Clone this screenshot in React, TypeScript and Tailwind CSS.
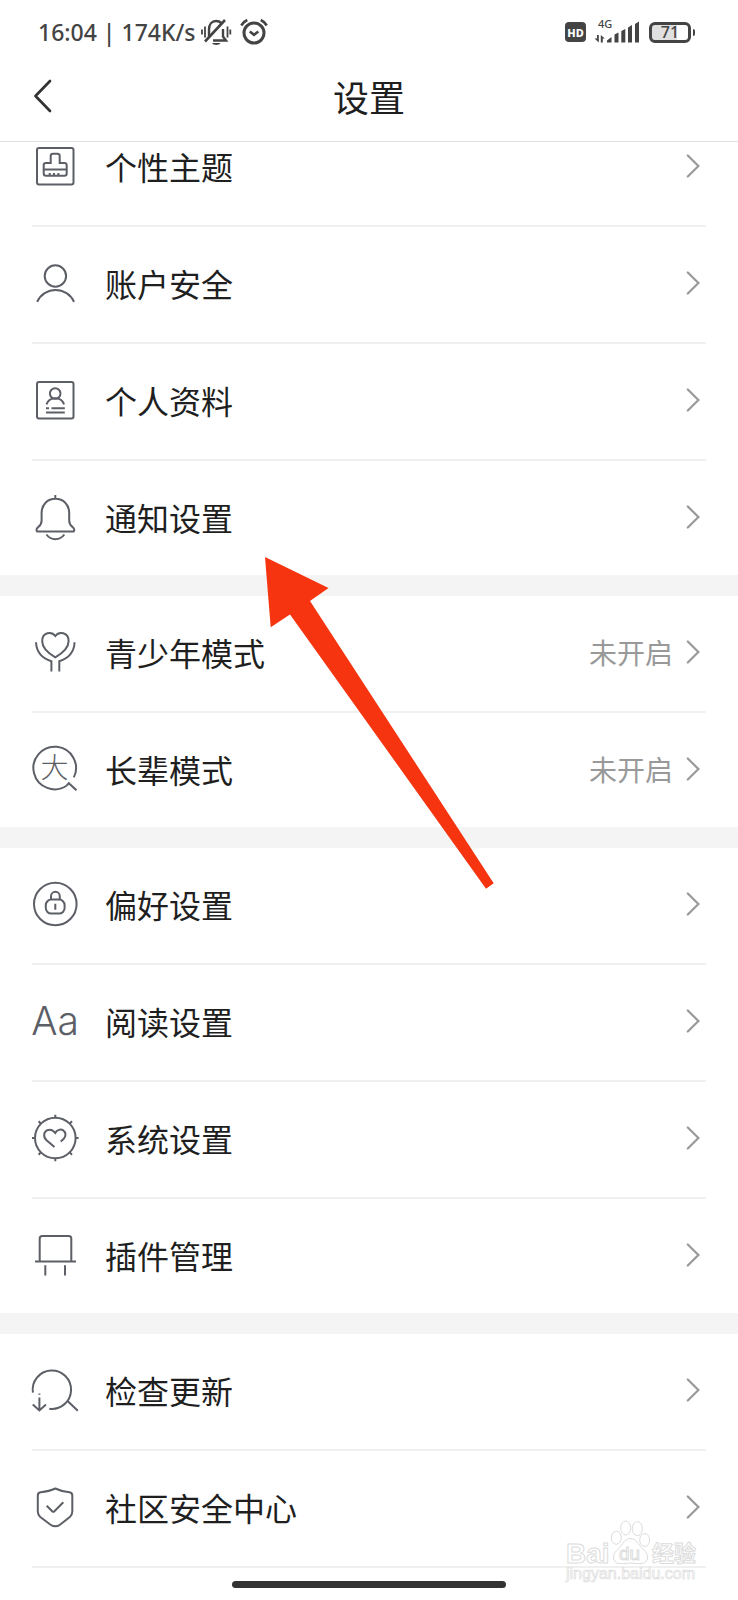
import type { ReactNode } from "react";

type Item = { label: string; icon: ReactNode; value?: string };

const iconText = '"Noto Sans CJK SC", sans-serif';

const icons = {
  theme: (
    <>
      <rect x="5" y="5" width="36.5" height="36.5" rx="2" />
      <path d="M18.7 20V13q0-2.3 2.3-2.3h4.4q2.3 0 2.3 2.3v7h4.7q2.3 0 2.3 2.3v8.2q0 2.3-2.3 2.3H14q-2.3 0-2.3-2.3v-8.2q0-2.3 2.3-2.3zM11.7 26.6h23M17.7 30v2M22 30v2M26.4 30v2" />
    </>
  ),
  user: (
    <>
      <circle cx="23.4" cy="16" r="10.7" />
      <path d="M5.2 41.8A20.2 20.2 0 0 1 42 41.8" />
    </>
  ),
  profile: (
    <>
      <rect x="5" y="5" width="36.5" height="36.5" rx="2" />
      <circle cx="23.2" cy="16.5" r="5.3" />
      <path d="M14.5 27.3a9.4 9.4 0 0 1 17.6 0M14 31.3h3M19.5 31.3h13.3M14 35.6h18.8" />
    </>
  ),
  bell: (
    <path d="M23.3 1v4M9.600 26.500V19C9.600 10.500 15.500 4.800 23.400 4.800S37.200 10.500 37.200 19v7.500c0 3 1.200 4.800 3.200 6.400c2.400 1.800 2.400 4.600 0.600 4.600H5.800c-1.800 0-1.800-2.800 0.600-4.600c2-1.600 3.200-3.400 3.200-6.400zM14.500 40.500c4.500 6.300 13.300 6.300 17.800 0" />
  ),
  teen: (
    <path d="M23.300 7C19.500 2 10.200 3 10.200 12.200C10.200 18.500 16 24 23.300 28.300C30.600 24 36.600 18.500 36.600 12.200C36.600 3 27 2 23.300 7zM4 13.300C4.500 23.500 10.500 29.500 19.400 32.300v10.200M42.600 13.300C42.100 23.500 36.100 29.500 27.300 32.300v10.200" />
  ),
  elder: (
    <>
      <path d="M41.800 31.400A21.300 21.300 0 1 0 34.800 39.500" />
      <path d="M34.800 39.500L36.800 37.200L44.500 44.300" />
      <text x="22.400" y="32" fontSize="28" textAnchor="middle" fill="#5c5f66" stroke="none" fontFamily={iconText} fontWeight="300">
        大
      </text>
    </>
  ),
  lock: (
    <>
      <circle cx="23.300" cy="23" r="21.300" />
      <rect x="13.800" y="18.600" width="18.800" height="14" rx="5.500" />
      <path d="M19 18.600v-3.400a4.400 4.400 0 0 1 8.800 0v3.400M23.300 22.700v6" />
    </>
  ),
  font: (
    <text x="23" y="37" fontSize="39" textAnchor="middle" fill="#5c5f66" stroke="none" fontFamily="Inter, sans-serif" fontWeight="300">
      Aa
    </text>
  ),
  system: (
    <>
      <circle cx="23.300" cy="23" r="20.300" />
      <path d="M23.300 2.700v-3M23.300 43.300v3M3 23h-3M43.600 23h3M9 8.700l-2.400-2.400M37.600 8.700l2.400-2.400M9 37.300l-2.400 2.400M37.600 37.300l2.400 2.400" />
      <path d="M22.500 32L14.500 25.200C11 22 11.500 17 15.300 15.200C18.500 13.900 21.500 15.500 23.200 18C25 15 28.500 13.700 31.200 15.300C34.500 17.500 33.800 21.500 31.800 23.700L28.700 26.400" />
    </>
  ),
  plugin: (
    <path d="M7.700 29.600V6.500q0-2.500 2.500-2.500h26.600q2.500 0 2.500 2.500v23.100M3 29.600h41M13.300 33.300v10.300M33 33.300v10.300" />
  ),
  update: (
    <path d="M0.900 25.600A19.200 19.200 0 1 1 17.300 41.700M35.300 33.700L45.800 43.700M7.400 26.500v1.200M7.400 30.500V43.300M0.800 37.500L7.400 43.500L14 37.500" />
  ),
  shield: (
    <path d="M23.300 4.500C27.500 6.600 32 7.700 37.500 8.200Q40.300 8.600 40.300 11.500V27.500Q40.300 31 37.800 33L28 40.700Q23.300 44 18.600 40.700L8.300 33Q5.800 31 5.800 27.500V11.500Q5.800 8.600 8.600 8.200C14 7.700 19 6.600 23.300 4.500zM14.700 21.700L20.200 27.200Q21.300 28.300 22.400 27.200L31.300 18.300" />
  ),
};

const groups: Item[][] = [
  [
    { label: "个性主题", icon: icons.theme },
    { label: "账户安全", icon: icons.user },
    { label: "个人资料", icon: icons.profile },
    { label: "通知设置", icon: icons.bell },
  ],
  [
    { label: "青少年模式", icon: icons.teen, value: "未开启" },
    { label: "长辈模式", icon: icons.elder, value: "未开启" },
  ],
  [
    { label: "偏好设置", icon: icons.lock },
    { label: "阅读设置", icon: icons.font },
    { label: "系统设置", icon: icons.system },
    { label: "插件管理", icon: icons.plugin },
  ],
  [
    { label: "检查更新", icon: icons.update },
    { label: "社区安全中心", icon: icons.shield },
  ],
];

function StatusBar() {
  return (
    <div className="flex h-16 items-center justify-between pr-[43px] pl-[38px] text-[#444]">
      <div className="flex items-center">
        <span className="font-['Noto_Sans'] text-[23px] leading-8 font-medium whitespace-nowrap">16:04 | 174K/s</span>
        <svg className="ml-1 h-[28px] w-[32px]" viewBox="0 0 32 28" fill="none" stroke="currentColor" strokeWidth="2">
          <path d="M2 11.500v5M5 8.500v11M27.500 8.500v11M30.300 11.500v5" strokeWidth="1.800" />
          <path d="M9 18.500V11.500C9 6 12 3 16 3c2.500 0 4.500 1 5.700 2.700M23 11v7.500l3 4H13" strokeWidth="2.400" />
          <path d="M5 23.500L25 2" strokeWidth="2.600" />
          <path d="M12 25h8.500c-1 2.500-7.500 2.500-8.500 0z" fill="currentColor" stroke="none" />
        </svg>
        <svg className="ml-2 h-[28px] w-[28px]" viewBox="0 0 28 28" fill="none" stroke="currentColor" strokeWidth="3">
          <circle cx="14" cy="15" r="10" />
          <path d="M9.800 13.500L14 16.800L18.300 13.500" strokeWidth="2.600" />
          <path d="M1.300 7.500Q3.500 3.500 7.300 2M20.700 2Q24.500 3.500 26.700 7.500" strokeWidth="2.600" />
        </svg>
      </div>
      <div className="flex items-center">
        <span className="flex h-5 w-[21px] items-center justify-center rounded bg-[#444] font-['Noto_Sans'] text-[11px] leading-none font-extrabold text-white">
          HD
        </span>
        <svg className="ml-2 h-[24px] w-[47px] overflow-visible" viewBox="0 0 47 24" fill="currentColor">
          <text x="4" y="8" fontSize="11" fontFamily="Noto Sans" fontWeight="500">4G</text>
          <path d="M3 15h1.800v7.500L0.500 18.500h2.500zM6.800 22.500v-7.500l4 3.500h-2v4z" />
          <path d="M13 22.500v-2l4.500-3.500v5.500zM20.500 14.500l4-2v10h-4zM27.300 11l4-2v13.500h-4zM34 7.500l4-2.500v17.500h-4zM41 4l4-2.500v21h-4z" />
        </svg>
        <div className="ml-2 flex items-center gap-[2px]">
          <div className="flex h-[21px] w-[42px] items-center justify-center rounded-[6px] border-[3px] border-[#444] bg-gradient-to-r from-[#e0e0e0] from-70% to-white to-70% font-['Noto_Sans'] text-[16px] leading-none font-medium">
            71
          </div>
          <div className="h-[7px] w-[2px] rounded-r bg-[#444]" />
        </div>
      </div>
    </div>
  );
}

function Row({ item, ruled }: { item: Item; ruled: boolean }) {
  return (
    <li className={ruled ? "h-[117px] border-b-2 border-[#f0f0f0]" : "h-[114px]"}>
      <a href="#" className="flex h-full items-center pr-[6px] pb-[3px]">
        <svg
          className="h-[46px] w-[46px] shrink-0 overflow-visible"
          viewBox="0 0 46 46"
          fill="none"
          stroke="#5c5f66"
          strokeWidth="2"
          aria-hidden="true"
        >
          {item.icon}
        </svg>
        <span className="ml-[27px] flex-1 text-[32px] leading-[46px] text-[#1f1f1f]">{item.label}</span>
        {item.value && <span className="mr-[13px] text-[28px] leading-10 text-[#999]">{item.value}</span>}
        <svg className="h-6 w-[14px]" viewBox="0 0 14 24" fill="none" stroke="#999" strokeWidth="2.200" strokeLinecap="round" aria-hidden="true">
          <path d="M1.800 1.500L12.400 12L1.800 22.500" />
        </svg>
      </a>
    </li>
  );
}

function Watermark() {
  return (
    <svg
      className="pointer-events-none absolute right-[38px] bottom-[14px] h-[68px] w-[136px]"
      viewBox="0 0 136 68"
      fill="#fff"
      stroke="#dcdcdc"
      strokeWidth="1"
    >
      <text x="2" y="43.500" fontSize="28" fontWeight="700" fontFamily="Liberation Sans">Bai</text>
      <ellipse cx="52.300" cy="18.700" rx="5" ry="6.500" />
      <ellipse cx="61.700" cy="9" rx="5" ry="7" />
      <ellipse cx="73.300" cy="9.700" rx="5" ry="7" />
      <ellipse cx="80.700" cy="21" rx="5" ry="6.500" />
      <path d="M66.500 19.500c5 0 7 4 10 8c3 3.500 7 6 7 10.500c0 8-8 7-17 6c-9 1-17 2-17-6c0-4.500 4-7 7-10.500c3-4 5-8 10-8z" />
      <text x="55" y="40.500" fontSize="19" fontFamily="Liberation Sans">du</text>
      <text x="88" y="42" fontSize="22" fontWeight="700" fontFamily={iconText}>经验</text>
      <text x="2" y="60" fontSize="16" strokeWidth="0.700" fontFamily="Liberation Sans">jingyan.baidu.com</text>
    </svg>
  );
}

export default function App() {
  return (
    <div className="relative min-h-screen overflow-hidden bg-white font-['Noto_Sans_CJK_SC',sans-serif]">
      <header className="relative z-10 border-b border-[#e2e2e2] bg-white">
        <StatusBar />
        <div className="grid h-[77px] grid-cols-[1fr_auto_1fr] items-center pb-[14px]">
          <button type="button" aria-label="返回" className="ml-8 flex w-8">
            <svg className="h-[34px] w-[22px]" viewBox="0 0 22 34" fill="none" stroke="#333" strokeWidth="2.700" strokeLinecap="round" strokeLinejoin="round">
              <path d="M18 2L3.500 17L18 32" />
            </svg>
          </button>
          <h1 className="text-[36px] leading-[52px] text-[#1f1f1f]">设置</h1>
        </div>
      </header>

      <main className="-mt-8">
        {groups.map((items, g) => (
          <section key={items[0].label}>
            {g > 0 && <div className="h-[21px] bg-[#f4f4f4]" />}
            <ul className="mx-8">
              {items.map((item, i) => (
                <Row key={item.label} item={item} ruled={g === groups.length - 1 || i < items.length - 1} />
              ))}
            </ul>
          </section>
        ))}
      </main>

      <footer className="flex justify-center py-[13px]">
        <div className="h-[7px] w-[37%] rounded-full bg-[#333]" />
      </footer>

      <svg className="pointer-events-none absolute top-[557px] left-[265px] z-20 h-[332px] w-[229px]" viewBox="0 0 229 332" fill="#f63410">
        <path d="M0 0L63.500 31L45 44L228.700 326.300L221 331.700L25 57.500L5.700 70.300z" />
      </svg>
      <Watermark />
    </div>
  );
}
